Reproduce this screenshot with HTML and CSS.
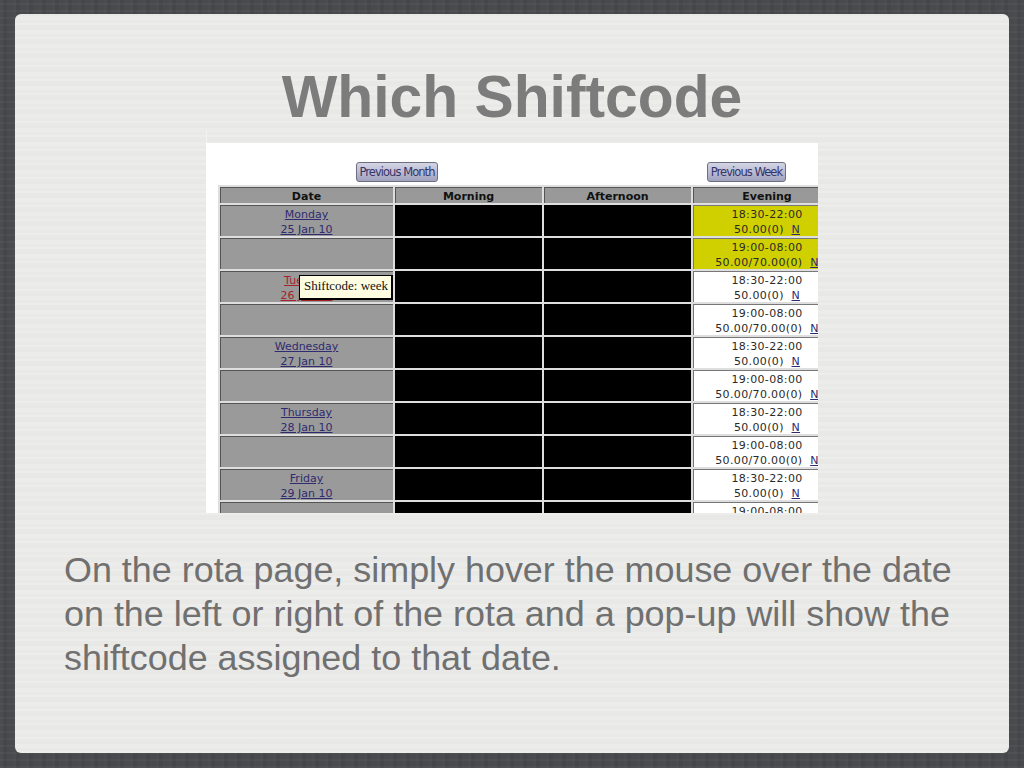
FILE: index.html
```html
<!DOCTYPE html>
<html lang="en">
<head>
<meta charset="utf-8">
<title>Which Shiftcode</title>
<link rel="stylesheet" href="styles.css">
</head>
<body>
<main class="slide">
  <h1 class="title">Which Shiftcode</h1>
  <div class="shot">
    <div class="nav">
      <button class="btn btn-month">Previous Month</button>
      <button class="btn btn-week">Previous Week</button>
    </div>
    <table class="rota">
      <colgroup><col class="c-date"><col class="c-slot"><col class="c-slot"><col class="c-eve"></colgroup>
      <thead>
        <tr><th>Date</th><th>Morning</th><th>Afternoon</th><th>Evening</th></tr>
      </thead>
      <tbody>
        <tr class="today"><td class="date"><div class="cell"><a href="#">Monday</a><br><a href="#">25 Jan 10</a></div></td><td class="off"></td><td class="off"></td><td class="eve"><div class="cell">18:30-22:00<br>50.00(0) &nbsp;<a href="#">N</a></div></td></tr>
        <tr class="today"><td class="date"></td><td class="off"></td><td class="off"></td><td class="eve"><div class="cell">19:00-08:00<br>50.00/70.00(0) &nbsp;<a href="#">N</a></div></td></tr>
        <tr><td class="date red"><div class="cell"><a href="#">Tuesday</a><br><a href="#">26 Jan 10</a></div></td><td class="off"></td><td class="off"></td><td class="eve"><div class="cell">18:30-22:00<br>50.00(0) &nbsp;<a href="#">N</a></div></td></tr>
        <tr><td class="date"></td><td class="off"></td><td class="off"></td><td class="eve"><div class="cell">19:00-08:00<br>50.00/70.00(0) &nbsp;<a href="#">N</a></div></td></tr>
        <tr><td class="date"><div class="cell"><a href="#">Wednesday</a><br><a href="#">27 Jan 10</a></div></td><td class="off"></td><td class="off"></td><td class="eve"><div class="cell">18:30-22:00<br>50.00(0) &nbsp;<a href="#">N</a></div></td></tr>
        <tr><td class="date"></td><td class="off"></td><td class="off"></td><td class="eve"><div class="cell">19:00-08:00<br>50.00/70.00(0) &nbsp;<a href="#">N</a></div></td></tr>
        <tr><td class="date"><div class="cell"><a href="#">Thursday</a><br><a href="#">28 Jan 10</a></div></td><td class="off"></td><td class="off"></td><td class="eve"><div class="cell">18:30-22:00<br>50.00(0) &nbsp;<a href="#">N</a></div></td></tr>
        <tr><td class="date"></td><td class="off"></td><td class="off"></td><td class="eve"><div class="cell">19:00-08:00<br>50.00/70.00(0) &nbsp;<a href="#">N</a></div></td></tr>
        <tr><td class="date"><div class="cell"><a href="#">Friday</a><br><a href="#">29 Jan 10</a></div></td><td class="off"></td><td class="off"></td><td class="eve"><div class="cell">18:30-22:00<br>50.00(0) &nbsp;<a href="#">N</a></div></td></tr>
        <tr><td class="date"></td><td class="off"></td><td class="off"></td><td class="eve"><div class="cell">19:00-08:00<br>50.00/70.00(0) &nbsp;<a href="#">N</a></div></td></tr>
      </tbody>
    </table>
    <div class="tip">Shiftcode: week</div>
  </div>
  <p class="body">On the rota page, simply hover the mouse over the date on the left or right of the rota and a pop-up will show the shiftcode assigned to that date.</p>
</main>
</body>
</html>
```

FILE: styles.css
```css
html, body { margin: 0; height: 100%; }
body {
  width: 1024px;
  height: 768px;
  overflow: hidden;
  box-sizing: border-box;
  padding: 14px 15px 15px;
  background-color: #494a4d;
  background-image:
    repeating-linear-gradient(90deg, rgba(255,255,255,.025) 0 3px, rgba(0,0,0,.03) 3px 7px, rgba(255,255,255,.012) 7px 13px),
    repeating-linear-gradient(0deg, rgba(255,255,255,.02) 0 2px, rgba(0,0,0,.03) 2px 7px);
  font-family: "Liberation Sans", Arial, sans-serif;
}
.slide {
  position: relative;
  width: 994px;
  height: 739px;
  box-sizing: border-box;
  border-radius: 6px;
  background-color: #ebebe9;
  background-image:
    repeating-linear-gradient(0deg, rgba(255,255,255,.12) 0 2px, rgba(0,0,0,.008) 2px 5px, rgba(255,255,255,.05) 5px 9px, rgba(0,0,0,.012) 9px 14px);
  display: flex;
  flex-direction: column;
  align-items: flex-start;
  padding-top: 50px;
}
.slide::before {
  content: "";
  position: absolute;
  left: 191px;
  top: 117px;
  width: 1px;
  height: 12px;
  background: #f4f4f3;
}
.title {
  margin: 0;
  width: 100%;
  text-align: center;
  font-size: 58.8px;
  line-height: 66px;
  font-weight: 700;
  color: #7c7c7c;
  height: 79px;
}
.shot {
  position: relative;
  width: 612px;
  height: 370px;
  margin-left: 191px;
  background: #fff;
  overflow: hidden;
  font-family: "DejaVu Sans", Verdana, sans-serif;
  font-size: 11px;
  color: #2a2a2a;
}
.nav {
  display: flex;
  height: 42px;
  box-sizing: border-box;
  padding: 19px 0 0 150px;
}
.btn {
  height: 20px;
  box-sizing: border-box;
  padding: 0;
  border: 1px solid #6c6f80;
  border-radius: 3px;
  background: linear-gradient(#d4d5e4, #a0a2bf);
  color: #35346a;
  font-family: "DejaVu Sans", Verdana, sans-serif;
  font-size: 11.5px;
  letter-spacing: -.95px;
  white-space: nowrap;
}
.btn-month { width: 82px; }
.btn-week { width: 79px; margin-left: 269px; }
.rota {
  table-layout: fixed;
  width: 479px;
  border-spacing: 2px;
  border-collapse: separate;
  margin-left: 12px;
  background: #dedede;
  padding: 0;
}
.rota col.c-date { width: 173px; }
.rota col.c-slot { width: 147px; }
.rota col.c-eve { width: 148px; }
.rota th {
  height: 16px;
  padding: 3px 0 0;
  box-sizing: border-box;
  background: #999;
  box-shadow: inset 1px 1px 0 #555;
  font-size: 11px;
  font-weight: 700;
  line-height: 13px;
  color: #111;
}
.rota td {
  height: 31px;
  padding: 2px 0 0;
  box-sizing: border-box;
  text-align: center;
  vertical-align: top;
  white-space: nowrap;
}
.cell {
  height: 29px;
  line-height: 15px;
}
.rota td.date { background: #9a9a9a; box-shadow: inset 1px 1px 0 #555; }
.rota td.off { background: #000; }
.rota td.eve { background: #fff; box-shadow: inset 1px 1px 0 #777; letter-spacing: .35px; }
.rota tr.today td.eve { background: #d0d000; box-shadow: inset 1px 1px 0 #777; }
.rota a { color: #2f2b70; text-decoration: underline; }
.rota .red a { color: #a5222a; }
.tip {
  position: absolute;
  left: 93px;
  top: 132px;
  width: 94px;
  height: 25px;
  box-sizing: border-box;
  border: 1px solid #000;
  border-right-width: 2px;
  border-bottom-width: 2px;
  padding-left: 4px;
  background: #fffde1;
  color: #111;
  font-family: "Liberation Serif", "Times New Roman", serif;
  font-size: 13px;
  line-height: 20px;
  white-space: nowrap;
}
.body {
  margin: 35px 0 0 49px;
  width: 900px;
  font-size: 35.9px;
  line-height: 44px;
  color: #707070;
}
```
